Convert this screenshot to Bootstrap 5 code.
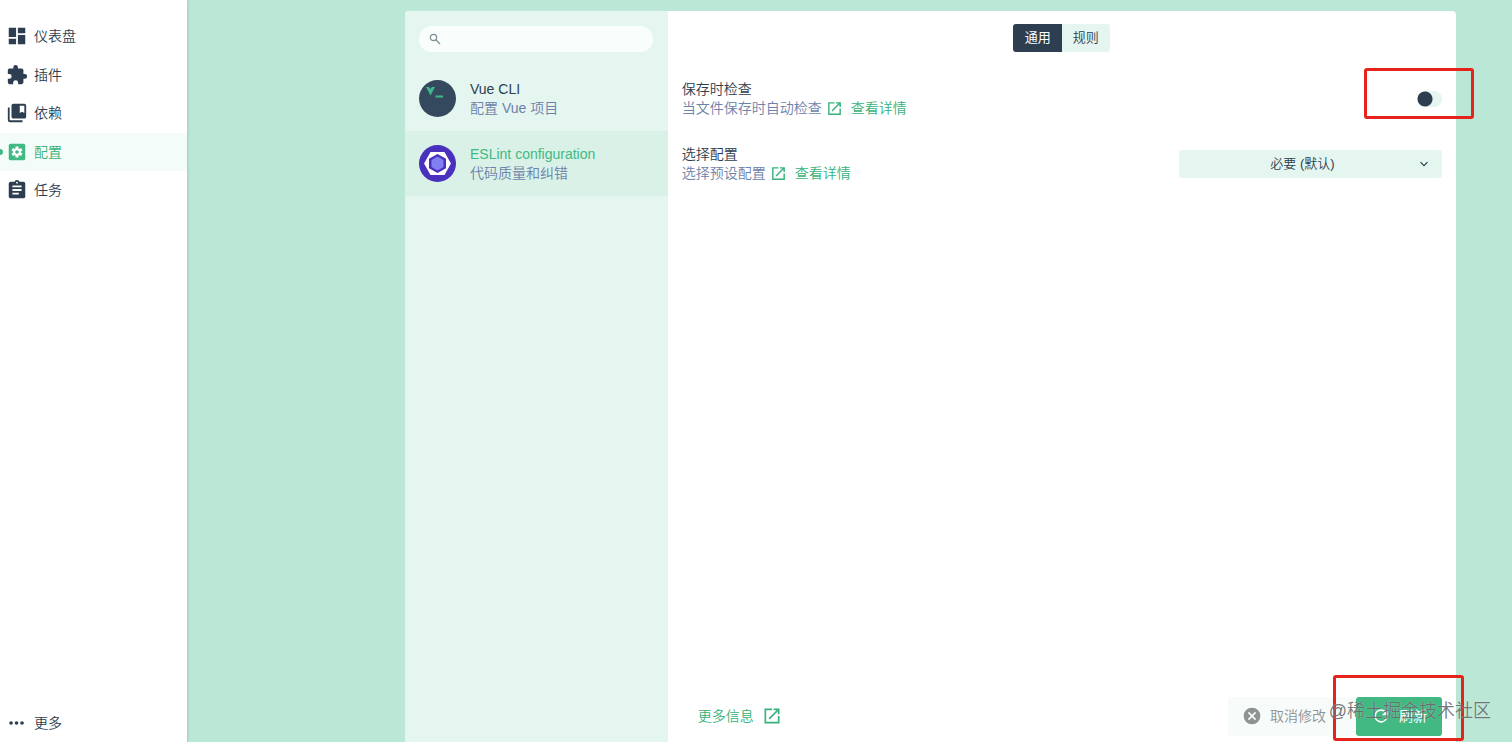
<!DOCTYPE html>
<html lang="zh-CN">
<head>
<meta charset="utf-8">
<meta name="viewport" content="width=device-width, initial-scale=1">
<title>ESLint configuration</title>
<link href="https://cdn.jsdelivr.net/npm/bootstrap@5.3.0/dist/css/bootstrap.min.css" rel="stylesheet">
<style>
  :root { --green: #42b983; --ink: #2c3e50; --muted: #6b82aa; --mint: #e4f6ef; --page: #bbe7d6; }
  body { font-family: "Liberation Sans", "Noto Sans CJK SC", sans-serif; font-size: 14px; font-weight: 350; line-height: 19px; color: var(--ink); background: var(--page); }
  a { color: #36b27a; text-decoration: none; }
  svg { flex: none; }
  .side { width: 187px; background: #fff; box-shadow: 0 0 3px rgba(0, 60, 40, .25); padding-top: 17px; }
  .side a { height: 38px; padding-left: 6px; gap: 6px; color: var(--ink); position: relative; }
  .side li:nth-child(even) { margin-top: 1px; }
  .side svg { width: 22px; height: 22px; }
  .side a.current { color: #36b27a; background: #f4fcf9; }
  .side a.current::before { content: ""; position: absolute; left: -3px; top: 16px; width: 6px; height: 6px; border-radius: 50%; background: var(--green); }
  .stage { padding: 11px 56px 0 218px; }
  .panel { background: #fff; border-radius: 4px 4px 0 0; }
  .plugins { width: 25%; background: var(--mint); border-top-left-radius: 4px; }
  .search-pill { margin: 15px 15px 14px 14px; height: 26px; border-radius: 13px; background: #f9fefc; padding: 0 10px; }
  .search-pill input { outline: 0; font-size: 13px; }
  .plugin { height: 65px; padding: 0 14px; gap: 14px; color: var(--ink); }
  .plugin.current { background: #d9f1e7; }
  .plugin.current .title { color: var(--green); }
  .plugin .title { font-size: 14px; }
  .muted { color: var(--muted); }
  .tabs { height: 56px; padding-bottom: 2px; }
  .tabs .btn { width: 49px; height: 28px; padding: 0; font-size: 13px; font-weight: 350; border: 0; color: var(--ink); background: var(--mint); border-radius: 3px; }
  .tabs .btn.active { color: #fff; background: var(--ink); font-weight: 400; }
  .setting { height: 65px; padding: 0 14px 1px; }
  .toggle { appearance: none; width: 25px; height: 16px; margin: 0; border-radius: 8px; background: radial-gradient(circle at 8px 8px, var(--ink) 7px, transparent 8px) var(--mint); }
  .preset { width: 263px; height: 28px; border: 0; border-radius: 3px; padding: 0 36px 0 20px; font-size: 13px; font-weight: 350; line-height: 28px; color: var(--ink); background-color: var(--mint); text-align: center; text-align-last: center;
    background-image: url("data:image/svg+xml,%3Csvg xmlns='http://www.w3.org/2000/svg' viewBox='0 0 12 12'%3E%3Cpath d='M2.5 4.2L6 7.7l3.500-3.500' fill='none' stroke='%232c3e50' stroke-width='1.200'/%3E%3C/svg%3E"); background-size: 12px; background-position: right 12px center; }
  .foot { height: 50px; padding: 0 14px 2px 30px; }
  .foot .btn { height: 39px; border: 0; border-radius: 3px; padding: 0; font-size: 14px; gap: 8px; }
  .foot .cancel { width: 128px; padding-left: 14px; color: #8d9396; background: #f7fbfa; opacity: 1; font-weight: 350; }
  .foot .refresh { width: 86px; background: var(--green); color: #fff; }
  .marker { position: absolute; border: 3px solid #e6231a; border-radius: 3px; pointer-events: none; }
  .marker-toggle { width: 110px; height: 51px; right: -18px; top: 1px; }
  .marker-refresh { width: 131px; height: 66px; right: -8px; top: -17px; }
  .stamp { position: absolute; right: -35px; top: 6px; font-size: 18px; line-height: 26px; color: rgba(80, 85, 85, .8); text-shadow: 0 0 1px rgba(255, 255, 255, .6); white-space: nowrap; pointer-events: none; }
</style>
</head>
<body>
<svg class="d-none" aria-hidden="true">
  <symbol id="open" viewBox="0 0 24 24"><path fill="currentColor" d="M19 19H5V5h7V3H3v18h18v-9h-2v7zM14 3v2h3.600l-9.800 9.800 1.400 1.400L19 6.400V10h2V3h-7z"/></symbol>
</svg>
<div class="d-flex min-vh-100">
  <nav class="side d-flex flex-column flex-shrink-0">
    <ul class="list-unstyled mb-0">
      <li><a href="#" class="d-flex align-items-center"><svg viewBox="0 0 24 24" fill="currentColor"><path d="M3 13h8V3H3v10zm0 8h8v-6H3v6zm10 0h8V11h-8v10zm0-18v6h8V3h-8z"/></svg>仪表盘</a></li>
      <li><a href="#" class="d-flex align-items-center"><svg viewBox="0 0 24 24" fill="currentColor"><path d="M20.500 11H19V7c0-1.100-.9-2-2-2h-4V3.500a2.500 2.500 0 0 0-5 0V5H4c-1.100 0-2 .9-2 2v3.800h1.500a2.700 2.700 0 0 1 0 5.400H2V20c0 1.100.9 2 2 2h3.800v-1.500a2.700 2.700 0 0 1 5.400 0V22H17c1.100 0 2-.9 2-2v-4h1.500a2.500 2.500 0 0 0 0-5z"/></svg>插件</a></li>
      <li><a href="#" class="d-flex align-items-center"><svg viewBox="0 0 24 24" fill="currentColor"><path d="M4 6H2v14a2 2 0 0 0 2 2h14v-2H4V6z"/><path d="M20 2H8a2 2 0 0 0-2 2v12c0 1.100.9 2 2 2h12a2 2 0 0 0 2-2V4a2 2 0 0 0-2-2zm0 10l-2.500-1.500L15 12V4h5v8z"/></svg>依赖</a></li>
      <li><a href="#" class="current d-flex align-items-center" aria-current="page"><svg viewBox="0 0 24 24"><rect x="3" y="3" width="18" height="18" rx="2" fill="#42b983"/><g stroke="#fff" stroke-width="3.200"><path d="M12 6v12M6.800 9l10.400 6M17.200 9L6.800 15"/></g><circle cx="12" cy="12" r="4.200" fill="#fff"/><circle cx="12" cy="12" r="2" fill="#42b983"/></svg>配置</a></li>
      <li><a href="#" class="d-flex align-items-center"><svg viewBox="0 0 24 24" fill="currentColor"><path d="M19 3h-4.180a3 3 0 0 0-5.640 0H5a2 2 0 0 0-2 2v14a2 2 0 0 0 2 2h14a2 2 0 0 0 2-2V5a2 2 0 0 0-2-2zm-7 0a1 1 0 1 1 0 2 1 1 0 0 1 0-2zm2 14H7v-2h7v2zm3-4H7v-2h10v2zm0-4H7V7h10v2z"/></svg>任务</a></li>
    </ul>
    <a href="#" class="d-flex align-items-center mt-auto"><svg viewBox="0 0 24 24" fill="currentColor"><circle cx="5.500" cy="12" r="2"/><circle cx="11.500" cy="12" r="2"/><circle cx="17.500" cy="12" r="2"/></svg>更多</a>
  </nav>

  <main class="stage d-flex flex-grow-1">
    <div class="panel d-flex flex-grow-1">
      <aside class="plugins flex-shrink-0">
        <label class="search-pill d-flex align-items-center gap-2">
          <svg width="12" height="12" viewBox="0 0 12 12" fill="none" stroke="#7d8f94" stroke-width="1.200"><circle cx="4.500" cy="4.500" r="3.200"/><path d="M7 7l4 4"/></svg>
          <input type="search" class="border-0 bg-transparent p-0 w-100" aria-label="搜索">
        </label>
        <a href="#" class="plugin d-flex align-items-center">
          <svg width="37" height="37" viewBox="0 0 37 37"><circle cx="18.500" cy="18.500" r="18.500" fill="#35495e"/><path fill="#3fb98c" d="M7 7h3l1.500 2L13 7h3l-4.500 8.500zM16.500 15.500h7.500v2h-7.500z"/></svg>
          <span><span class="title d-block">Vue CLI</span><span class="muted d-block">配置 Vue 项目</span></span>
        </a>
        <a href="#" class="plugin current d-flex align-items-center">
          <svg width="37" height="37" viewBox="0 0 37 37"><circle cx="18.500" cy="18.500" r="18.500" fill="#4930bd"/><path fill="#fff" d="M5 18.500L11.500 7h14L32 18.500 25.500 30h-14z"/><path fill="#4930bd" d="M18.500 9l8.500 4.800v9.400l-8.500 4.800-8.500-4.800v-9.400z"/><path fill="#8080f2" d="M18.500 11.500l6 3.500v7l-6 3.500-6-3.500v-7z"/></svg>
          <span><span class="title d-block">ESLint configuration</span><span class="muted d-block">代码质量和纠错</span></span>
        </a>
      </aside>

      <section class="flex-grow-1 d-flex flex-column">
        <div class="tabs d-flex align-items-center justify-content-center">
          <div class="btn-group" role="group"><button type="button" class="btn active">通用</button><button type="button" class="btn">规则</button></div>
        </div>
        <div class="setting d-flex align-items-center justify-content-between position-relative">
          <div>
            <label class="d-block" for="lint-on-save">保存时检查</label>
            <div class="d-flex align-items-center"><span class="muted">当文件保存时自动检查</span><a href="#" class="d-flex align-items-center ms-1 gap-2"><svg width="17" height="17"><use href="#open"/></svg>查看详情</a></div>
          </div>
          <input type="checkbox" role="switch" class="toggle" id="lint-on-save">
          <span class="marker marker-toggle"></span>
        </div>
        <div class="setting d-flex align-items-center justify-content-between">
          <div>
            <label class="d-block" for="preset">选择配置</label>
            <div class="d-flex align-items-center"><span class="muted">选择预设配置</span><a href="#" class="d-flex align-items-center ms-1 gap-2"><svg width="17" height="17"><use href="#open"/></svg>查看详情</a></div>
          </div>
          <select id="preset" class="form-select preset"><option>必要 (默认)</option></select>
        </div>
        <div class="foot d-flex align-items-center mt-auto position-relative">
          <a href="#" class="d-flex align-items-center gap-2 me-auto">更多信息<svg width="20" height="20"><use href="#open"/></svg></a>
          <button type="button" class="btn cancel d-flex align-items-center" disabled><svg width="20" height="20" viewBox="0 0 24 24" fill="#8f9393"><path d="M12 2a10 10 0 1 0 0 20 10 10 0 0 0 0-20zm5 13.600L15.600 17 12 13.400 8.400 17 7 15.600 10.600 12 7 8.400 8.400 7l3.600 3.600L15.600 7 17 8.400 13.400 12z"/></svg>取消修改</button>
          <button type="button" class="btn refresh d-flex align-items-center justify-content-center"><svg width="20" height="20" viewBox="0 0 24 24" fill="currentColor"><path d="M17.650 6.350A8 8 0 1 0 19.730 14h-2.080A6 6 0 1 1 12 6c1.660 0 3.140.69 4.220 1.780L13 11h7V4z"/></svg>刷新</button>
          <span class="marker marker-refresh"></span>
          <span class="stamp">@稀土掘金技术社区</span>
        </div>
      </section>
    </div>
  </main>
</div>
<script src="https://cdn.jsdelivr.net/npm/bootstrap@5.3.0/dist/js/bootstrap.bundle.min.js"></script>
</body>
</html>
